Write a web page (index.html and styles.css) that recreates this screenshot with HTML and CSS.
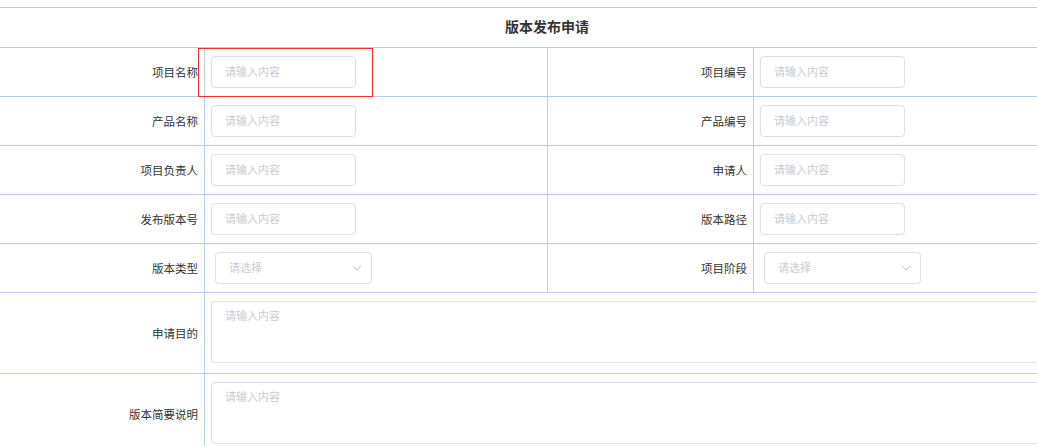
FILE: index.html
```html
<!DOCTYPE html>
<html lang="zh-CN">
<head>
    <meta charset="UTF-8">
    <title>版本发布申请</title>
    <link rel="stylesheet" href="styles.css">
</head>
<body>
<div class="formbox">
    <div class="title">版本发布申请</div>

    <div class="label">项目名称</div>
    <div class="field">
        <input class="ipt" type="text" placeholder="请输入内容">
        <span class="mark"></span>
    </div>
    <div class="label">项目编号</div>
    <div class="field"><input class="ipt" type="text" placeholder="请输入内容"></div>

    <div class="label">产品名称</div>
    <div class="field"><input class="ipt" type="text" placeholder="请输入内容"></div>
    <div class="label">产品编号</div>
    <div class="field"><input class="ipt" type="text" placeholder="请输入内容"></div>

    <div class="label">项目负责人</div>
    <div class="field"><input class="ipt" type="text" placeholder="请输入内容"></div>
    <div class="label">申请人</div>
    <div class="field"><input class="ipt" type="text" placeholder="请输入内容"></div>

    <div class="label">发布版本号</div>
    <div class="field"><input class="ipt" type="text" placeholder="请输入内容"></div>
    <div class="label">版本路径</div>
    <div class="field"><input class="ipt" type="text" placeholder="请输入内容"></div>

    <div class="label">版本类型</div>
    <div class="field sel-field">
        <div class="sel">
            <input class="ipt" type="text" readonly placeholder="请选择">
            <svg class="arrow" width="10" height="6" viewBox="0 0 10 6"><polyline points="1,1 5,5 9,1" fill="none" stroke="#c0c4cc" stroke-width="1"/></svg>
        </div>
    </div>
    <div class="label">项目阶段</div>
    <div class="field sel-field">
        <div class="sel">
            <input class="ipt" type="text" readonly placeholder="请选择">
            <svg class="arrow" width="10" height="6" viewBox="0 0 10 6"><polyline points="1,1 5,5 9,1" fill="none" stroke="#c0c4cc" stroke-width="1"/></svg>
        </div>
    </div>

    <div class="label">申请目的</div>
    <div class="field wide"><textarea class="txt" placeholder="请输入内容"></textarea></div>

    <div class="label">版本简要说明</div>
    <div class="field wide"><textarea class="txt" placeholder="请输入内容"></textarea></div>
</div>
</body>
</html>
```

FILE: styles.css
```css
body{
    margin: 0;
    padding-top: 7px;
    font-family: "Liberation Sans", "Noto Sans CJK SC", sans-serif;
    font-size: 11.5px;
    color: #333;
}
.formbox{
    width: 1094px;
    display: grid;
    grid-template-columns: 204px 342px 205px 340px;
    grid-template-rows: 39px repeat(5, 48px) repeat(2, 80px);
    gap: 1px;
    background: #b8cdec;
    border-top: 1px solid #b8cdec;
    border-bottom: 1px solid #b8cdec;
}
.formbox > div{
    background: #fff;
}
.title{
    grid-column: 1 / -1;
    line-height: 39px;
    text-align: center;
    font-size: 14px;
    font-weight: bold;
    color: #333;
}
.label{
    display: flex;
    align-items: center;
    justify-content: flex-end;
    padding-right: 6px;
}
.field{
    position: relative;
    display: flex;
    align-items: center;
    padding-left: 6px;
}
.wide{
    grid-column: 2 / -1;
    align-items: flex-start;
    padding-top: 8px;
}
.ipt{
    box-sizing: border-box;
    width: 145px;
    height: 32px;
    padding: 0 13px;
    border: 1px solid #dcdfe6;
    border-radius: 4px;
    font: 11px "Liberation Sans", "Noto Sans CJK SC", sans-serif;
    color: #606266;
    outline: none;
}
.ipt::placeholder,
.txt::placeholder{
    color: #c8cbd2;
}
.sel-field{
    padding-left: 10px;
}
.sel{
    position: relative;
}
.sel .ipt{
    width: 157px;
}
.sel .arrow{
    position: absolute;
    right: 10px;
    top: 13px;
}
.txt{
    box-sizing: border-box;
    width: calc(100% - 12px);
    height: 62px;
    padding: 5px 13px;
    border: 1px solid #dcdfe6;
    border-radius: 4px;
    font: 11px "Liberation Sans", "Noto Sans CJK SC", sans-serif;
    resize: none;
    outline: none;
}
/* 当前选中的单元格 */
.mark{
    position: absolute;
    left: -7px;
    top: 0;
    width: 175px;
    height: 49px;
    box-sizing: border-box;
    border: 1px solid #f23030;
    pointer-events: none;
}
```
